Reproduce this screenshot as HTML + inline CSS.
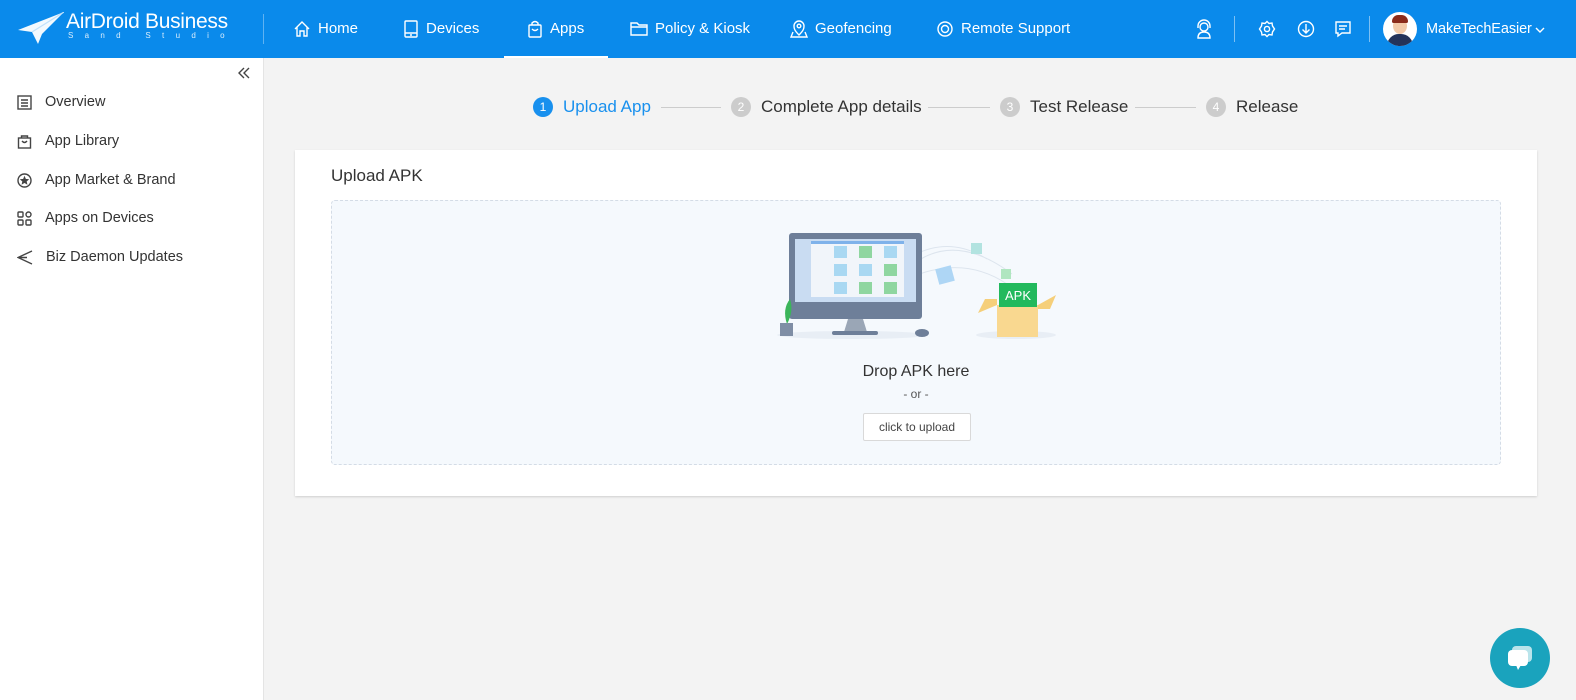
<!DOCTYPE html>
<html><head><meta charset="utf-8"><style>
*{box-sizing:border-box;margin:0;padding:0}
body{width:1576px;height:700px;overflow:hidden;font-family:"Liberation Sans",sans-serif;background:#f3f3f3;position:relative;color:#333}
.hdr{position:absolute;left:0;top:0;width:1576px;height:58px;background:#0a8aeb;color:#fff}
.hdr .it{position:absolute;top:0;height:58px;line-height:58px;font-size:15px;display:flex;align-items:center;gap:7px}
.hdr svg{stroke:#fff;fill:none;stroke-width:1.4}
.side{position:absolute;left:0;top:58px;width:264px;height:642px;background:#fff;border-right:1px solid #e4e4e4}
.side .m{position:absolute;left:17px;font-size:14.5px;color:#333;display:flex;align-items:center;gap:13px}
.side svg{stroke:#444;fill:none;stroke-width:1.4}
.step{position:absolute;top:97px;font-size:17px;display:flex;align-items:center;gap:10px;color:#333}
.num{width:20px;height:20px;border-radius:50%;background:#ccc;color:#fff;font-size:12px;text-align:center;line-height:20px}
.line{position:absolute;top:107px;height:1px;background:#ccc}
</style></head><body>
<div class="hdr">
  <svg style="position:absolute;left:18px;top:12px" width="46" height="32" viewBox="0 0 46 32"><path d="M46 0 L0 18 L14 20 L20 32 L24 22 Z" fill="#fff" stroke="none" opacity=".95"/><path d="M46 0 L14 20" stroke="#bfe0fb" stroke-width="1.2"/></svg>
  <div style="position:absolute;left:66px;top:10px;font-size:21px;letter-spacing:-.3px">AirDroid Business</div>
  <div style="position:absolute;left:68px;top:31px;font-size:8px;letter-spacing:11.3px;opacity:.85">Sand Studio</div>
  <div style="position:absolute;left:263px;top:14px;width:1px;height:30px;background:#5fb2f2"></div>
  <div class="it" style="left:293px"><svg width="18" height="18" viewBox="0 0 18 18"><path d="M2 9 L9 2 L16 9 M4 7 V16 H7 V11 H11 V16 H14 V7"/></svg>Home</div>
  <div class="it" style="left:403px"><svg width="16" height="18" viewBox="0 0 16 18"><rect x="2" y="1" width="12" height="16" rx="1"/><path d="M2 13 H14 M7 15 H9"/></svg>Devices</div>
  <div class="it" style="left:527px"><svg width="16" height="18" viewBox="0 0 16 18"><rect x="2" y="5" width="12" height="12" rx="1"/><path d="M5 5 V3 Q8 0 11 3 V5 M5 9 Q8 12 11 9"/></svg>Apps</div>
  <div style="position:absolute;left:504px;top:56px;width:104px;height:2px;background:#fff"></div>
  <div class="it" style="left:630px"><svg width="18" height="16" viewBox="0 0 18 16"><path d="M1 2 H7 L9 4 H17 V14 H1 Z M1 6 H17"/></svg>Policy &amp; Kiosk</div>
  <div class="it" style="left:790px"><svg width="18" height="18" viewBox="0 0 18 18"><path d="M9 15 C4 10 4 8 4 6 A5 5 0 0 1 14 6 C14 8 14 10 9 15 Z M3 12 L1 17 H17 L15 12"/><circle cx="9" cy="6" r="1.8"/></svg>Geofencing</div>
  <div class="it" style="left:936px"><svg width="18" height="18" viewBox="0 0 18 18" stroke-width="2"><circle cx="9" cy="9" r="7"/><circle cx="9" cy="9" r="3.5"/></svg>Remote Support</div>
  <svg style="position:absolute;left:1195px;top:19px" width="18" height="20" viewBox="0 0 18 20"><circle cx="9" cy="8" r="4"/><path d="M3 9 V7 A6 6 0 0 1 15 7 V9 M3 19 Q3 13 9 13 Q15 13 15 19 Z"/></svg>
  <div style="position:absolute;left:1234px;top:16px;width:1px;height:26px;background:#7cc0f4"></div>
  <svg style="position:absolute;left:1258px;top:20px" width="18" height="18" viewBox="0 0 18 18"><circle cx="9" cy="9" r="2.6"/><path d="M9 1.5 L11 3.5 L14 3 L14.5 6 L16.5 9 L14.5 12 L14 15 L11 14.5 L9 16.5 L7 14.5 L4 15 L3.5 12 L1.5 9 L3.5 6 L4 3 L7 3.5 Z"/></svg>
  <svg style="position:absolute;left:1297px;top:20px" width="18" height="18" viewBox="0 0 18 18"><circle cx="9" cy="9" r="7.5"/><path d="M9 4 V13 M5.5 9.5 L9 13 L12.5 9.5"/></svg>
  <svg style="position:absolute;left:1334px;top:20px" width="18" height="18" viewBox="0 0 18 18"><path d="M2 2 H16 V13 H8 L4 16 V13 H2 Z M5 6 H13 M5 9 H11"/></svg>
  <div style="position:absolute;left:1369px;top:16px;width:1px;height:26px;background:#7cc0f4"></div>
  <div style="position:absolute;left:1383px;top:12px;width:34px;height:34px;border-radius:50%;background:#fff;overflow:hidden">
    <div style="position:absolute;left:10px;top:6px;width:14px;height:16px;border-radius:50%;background:#f2c9a8"></div>
    <div style="position:absolute;left:9px;top:3px;width:16px;height:8px;border-radius:8px 8px 2px 2px;background:#8a2a1a"></div>
    <div style="position:absolute;left:4px;top:22px;width:26px;height:16px;border-radius:12px 12px 0 0;background:#24335a"></div>
  </div>
  <div style="position:absolute;left:1426px;top:21px;font-size:14.5px;letter-spacing:-.1px">MakeTechEasier</div>
  <svg style="position:absolute;left:1535px;top:27px" width="10" height="6" viewBox="0 0 10 6"><path d="M1 1 L5 5 L9 1"/></svg>
</div>

<div class="side">
  <svg style="position:absolute;left:237px;top:9px" width="14" height="12" viewBox="0 0 14 12"><path d="M7 1 L2 6 L7 11 M12 1 L7 6 L12 11"/></svg>
  <div class="m" style="top:36px"><svg width="15" height="15" viewBox="0 0 15 15"><rect x="1" y="1" width="13" height="13"/><path d="M4 5 H11 M4 8 H11 M4 11 H11"/></svg>Overview</div>
  <div class="m" style="top:75px"><svg width="15" height="15" viewBox="0 0 15 15"><rect x="1.5" y="4" width="12" height="10"/><path d="M4.5 4 V2 H10.5 V4 M5 7 Q7.5 10 10 7"/></svg>App Library</div>
  <div class="m" style="top:114px"><svg width="15" height="15" viewBox="0 0 15 15"><circle cx="7.5" cy="7.5" r="6.5"/><path d="M7.5 4.5 L8.4 6.6 L10.5 6.8 L8.9 8.2 L9.4 10.3 L7.5 9.2 L5.6 10.3 L6.1 8.2 L4.5 6.8 L6.6 6.6 Z" fill="#444"/></svg>App Market &amp; Brand</div>
  <div class="m" style="top:152px"><svg width="15" height="15" viewBox="0 0 15 15"><rect x="1" y="1" width="5" height="5" rx="1"/><circle cx="11.5" cy="3.5" r="2.5"/><rect x="1" y="9" width="5" height="5" rx="1"/><rect x="9" y="9" width="5" height="5" rx="1"/></svg>Apps on Devices</div>
  <div class="m" style="top:191px"><svg width="16" height="15" viewBox="0 0 16 15"><path d="M15 1 L1 7.5 L15 14 M1 7.5 H10"/></svg>Biz Daemon Updates</div>
</div>

<div class="step" style="left:533px;color:#1890ee"><div class="num" style="background:#1890ee">1</div>Upload App</div>
<div class="line" style="left:661px;width:60px"></div>
<div class="step" style="left:731px"><div class="num">2</div>Complete App details</div>
<div class="line" style="left:928px;width:62px"></div>
<div class="step" style="left:1000px"><div class="num">3</div>Test Release</div>
<div class="line" style="left:1135px;width:61px"></div>
<div class="step" style="left:1206px"><div class="num">4</div>Release</div>

<div style="position:absolute;left:295px;top:150px;width:1242px;height:346px;background:#fff;box-shadow:0 1px 2px rgba(0,0,0,.15)">
  <div style="position:absolute;left:36px;top:16px;font-size:17px;color:#333">Upload APK</div>
  <div style="position:absolute;left:36px;top:50px;width:1170px;height:265px;background:#f5f9fd;border:1px dashed #d4dce6;border-radius:4px">
    <svg style="position:absolute;left:440px;top:28px" width="290" height="112" viewBox="0 0 290 112">
      <ellipse cx="80" cy="106" rx="75" ry="4" fill="#e8eef5"/>
      <ellipse cx="244" cy="106" rx="40" ry="4" fill="#e8eef5"/>
      <path d="M135 40 Q180 0 240 45 M135 30 Q175 5 215 30 M135 50 Q190 25 235 55" stroke="#dde5ee" fill="none"/>
      <rect x="17" y="4" width="133" height="86" rx="3" fill="#6e7f99"/>
      <rect x="23" y="10" width="121" height="63" fill="#c9dcf2"/>
      <rect x="39" y="12" width="93" height="56" fill="#f1f5fa"/>
      <rect x="39" y="12" width="93" height="3" fill="#7fb2ea"/>
      <g>
        <rect x="62" y="17" width="13" height="12" fill="#a9d8f2"/><rect x="87" y="17" width="13" height="12" fill="#8fd6a0"/><rect x="112" y="17" width="13" height="12" fill="#a9d8f2"/>
        <rect x="62" y="35" width="13" height="12" fill="#a9d8f2"/><rect x="87" y="35" width="13" height="12" fill="#a9d8f2"/><rect x="112" y="35" width="13" height="12" fill="#8fd6a0"/>
        <rect x="62" y="53" width="13" height="12" fill="#a9d8f2"/><rect x="87" y="53" width="13" height="12" fill="#8fd6a0"/><rect x="112" y="53" width="13" height="12" fill="#8fd6a0"/>
      </g>
      <path d="M76 90 L72 103 H95 L91 90 Z" fill="#9aa6b6"/><rect x="60" y="102" width="46" height="4" rx="2" fill="#6e7f99"/>
      <ellipse cx="150" cy="104" rx="7" ry="4" fill="#6e7f99"/>
      <path d="M15 95 Q10 80 18 70 Q22 82 15 95Z" fill="#3bb55a"/><rect x="8" y="94" width="13" height="13" fill="#7f8ea5"/>
      <rect x="165" y="38" width="16" height="16" fill="#aed6f5" transform="rotate(-15 173 46)"/>
      <rect x="199" y="14" width="11" height="11" fill="#b2e3e0"/>
      <rect x="229" y="40" width="10" height="10" fill="#b0e6c0"/>
      <path d="M225 76 L206 84 L213 70 L225 70 Z" fill="#f5cf7a"/>
      <path d="M266 76 L284 66 L278 80 L266 80 Z" fill="#f5cf7a"/>
      <rect x="225" y="76" width="41" height="32" fill="#f9d890"/>
      <rect x="227" y="54" width="38" height="24" fill="#22b95d"/>
      <text x="246" y="71" font-family="Liberation Sans" font-size="13" fill="#fff" text-anchor="middle">APK</text>
    </svg>
    <div style="position:absolute;left:0;width:100%;top:162px;text-align:center;font-size:16px;color:#333">Drop APK here</div>
    <div style="position:absolute;left:0;width:100%;top:186px;text-align:center;font-size:12px;color:#555">- or -</div>
    <div style="position:absolute;left:531px;top:212px;width:108px;height:28px;background:#fff;border:1px solid #d9d9d9;border-radius:2px;font-size:12px;color:#444;text-align:center;line-height:26px">click to upload</div>
  </div>
</div>

<div style="position:absolute;left:1490px;top:628px;width:60px;height:60px;border-radius:50%;background:#1aa3bd">
  <svg style="position:absolute;left:16px;top:17px" width="30" height="28" viewBox="0 0 30 28"><rect x="6" y="1" width="20" height="16" rx="4" fill="#fff" opacity=".7"/><rect x="2" y="5" width="20" height="16" rx="4" fill="#fff"/><path d="M10 20 L12 25 L15 20Z" fill="#fff"/></svg>
</div>
</body></html>
